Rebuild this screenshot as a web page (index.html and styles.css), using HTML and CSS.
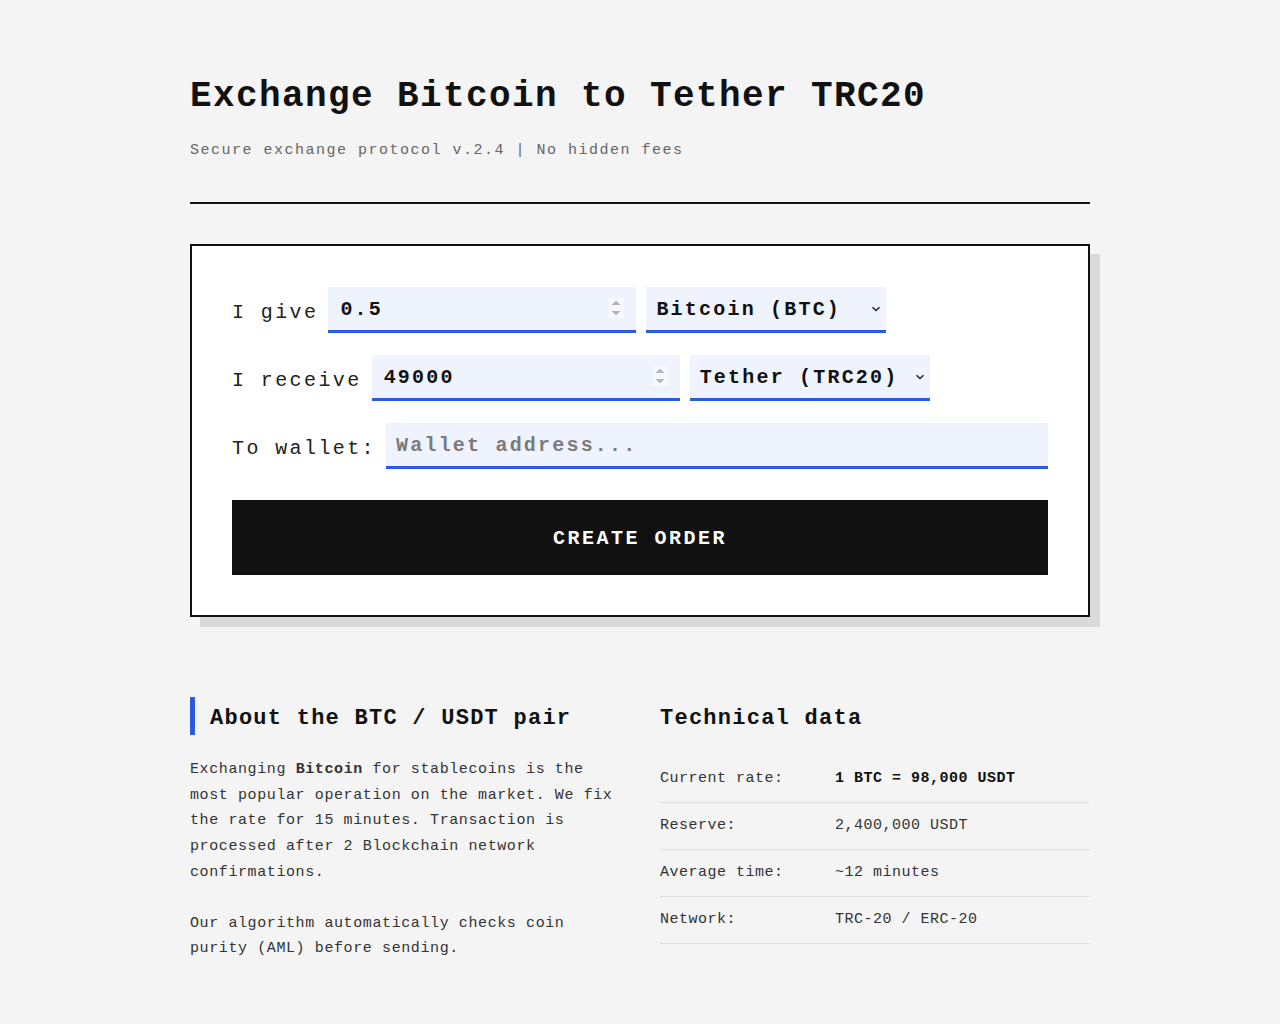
FILE: index.html
```html
<!DOCTYPE html>
<html lang="en">
<head>
<meta charset="utf-8">
<title>Exchange Bitcoin to Tether TRC20</title>
<link rel="stylesheet" href="styles.css">
</head>
<body>
<div class="page">
  <header class="header">
    <h1 class="title">Exchange Bitcoin to Tether TRC20</h1>
    <p class="subtitle">Secure exchange protocol v.2.4 | No hidden fees</p>
  </header>

  <form class="card">
    <div class="row">
      <label class="label">I give</label>
      <input class="field num" type="number" value="0.5">
      <span class="sel-wrap">
        <select class="field sel"><option>Bitcoin (BTC)</option></select>
        <svg class="chev" width="10" height="6" viewBox="0 0 10 6"><path d="M1.5 1.2 L5 4.6 L8.5 1.2" fill="none" stroke="#222" stroke-width="1.4"/></svg>
      </span>
    </div>
    <div class="row">
      <label class="label">I receive</label>
      <input class="field num" type="number" value="49000">
      <span class="sel-wrap">
        <select class="field sel"><option>Tether (TRC20)</option></select>
        <svg class="chev" width="10" height="6" viewBox="0 0 10 6"><path d="M1.5 1.2 L5 4.6 L8.5 1.2" fill="none" stroke="#222" stroke-width="1.4"/></svg>
      </span>
    </div>
    <div class="row">
      <label class="label">To wallet:</label>
      <input class="field wallet" type="text" placeholder="Wallet address...">
    </div>
    <button class="submit" type="button">CREATE ORDER</button>
  </form>

  <section class="info">
    <div class="about">
      <h2 class="about-title">About the BTC / USDT pair</h2>
      <p class="text">Exchanging <b>Bitcoin</b> for stablecoins is the most popular operation on the market. We fix the rate for 15 minutes. Transaction is processed after 2 Blockchain network confirmations.</p>
      <p class="text">Our algorithm automatically checks coin purity (AML) before sending.</p>
    </div>
    <div class="tech">
      <h2 class="tech-title">Technical data</h2>
      <div class="trow"><span class="tkey">Current rate:</span><span class="tval strong">1 BTC = 98,000 USDT</span></div>
      <div class="trow"><span class="tkey">Reserve:</span><span class="tval">2,400,000 USDT</span></div>
      <div class="trow"><span class="tkey">Average time:</span><span class="tval">~12 minutes</span></div>
      <div class="trow"><span class="tkey">Network:</span><span class="tval">TRC-20 / ERC-20</span></div>
    </div>
  </section>
</div>
</body>
</html>
```

FILE: styles.css
```css
* { box-sizing: border-box; }
html, body { margin: 0; padding: 0; }
body {
  background: #f4f4f4;
  color: #111;
  font-family: "Liberation Mono", "Courier New", monospace;
}
.page {
  width: 900px;
  margin: 0 auto;
  padding-top: 77px;
}
.header {
  border-bottom: 2px solid #111;
  padding-bottom: 41px;
  margin-bottom: 40px;
}
.title {
  margin: 0;
  font-size: 36px;
  font-weight: bold;
  letter-spacing: 1.4px;
  line-height: 40px;
}
.subtitle {
  margin: 24px 0 0;
  font-size: 15px;
  letter-spacing: 1.5px;
  color: #666;
  line-height: 20px;
}
.card {
  background: #fff;
  border: 2px solid #111;
  box-shadow: 10px 10px 0 #dadada;
  padding: 41px 40px 40px;
  display: flex;
  flex-direction: column;
  gap: 22px;
}
.row {
  display: flex;
  align-items: center;
  gap: 10px;
}
.label {
  font-size: 20px;
  letter-spacing: 2.4px;
  color: #222;
  padding-top: 5px;
}
.field {
  height: 46px;
  background: #eef3fd;
  border: none;
  border-bottom: 3px solid #2d5be0;
  border-radius: 0;
  font-family: "Liberation Mono", "Courier New", monospace;
  font-weight: bold;
  font-size: 20px;
  letter-spacing: 2.2px;
  color: #111;
  outline: none;
}
.num {
  width: 308px;
  padding: 2px 12px 0;
}
.num::-webkit-inner-spin-button {
  opacity: 0.6;
  height: 20px;
}
.sel-wrap {
  position: relative;
  display: block;
}
.sel {
  display: block;
  width: 240px;
  padding: 2px 10px 0;
  -webkit-appearance: none;
  appearance: none;
}
.chev {
  position: absolute;
  right: 5px;
  top: 19px;
  pointer-events: none;
}
.wallet {
  flex: 1;
  padding: 2px 10px 0;
}
.wallet::placeholder {
  color: #7b7b7b;
  font-weight: bold;
}
.submit {
  margin-top: 9px;
  height: 75px;
  background: #111;
  color: #fff;
  border: none;
  font-family: "Liberation Mono", "Courier New", monospace;
  font-weight: bold;
  font-size: 20px;
  letter-spacing: 2.5px;
  padding-top: 3px;
}
.info {
  margin-top: 80px;
  display: grid;
  grid-template-columns: 1fr 1fr;
  gap: 40px;
}
.about-title, .tech-title {
  margin: 0 0 22px;
  font-size: 22px;
  letter-spacing: 1.25px;
  line-height: 33px;
  padding-top: 5px;
}
.about-title {
  border-left: 5px solid #2d5be0;
  padding-left: 15px;
}
.text {
  margin: 0 0 25px;
  font-size: 15px;
  letter-spacing: 0.6px;
  line-height: 25.7px;
  color: #333;
}
.tech-title { margin-bottom: 21px; }
.trow {
  display: flex;
  border-bottom: 1px solid #ddd;
  padding: 12px 0;
  font-size: 15px;
  letter-spacing: 0.5px;
  line-height: 22px;
  color: #333;
}
.tkey { width: 175px; flex: none; }
.strong { font-weight: bold; color: #111; }
```
